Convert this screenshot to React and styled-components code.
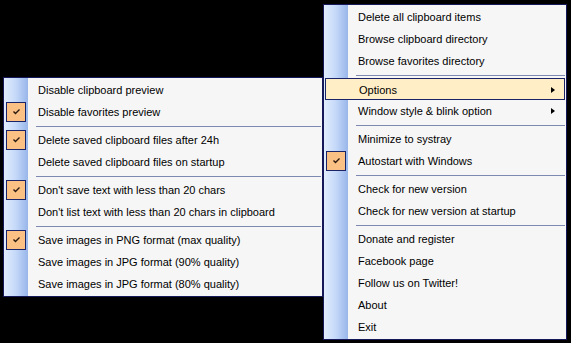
import React from 'react';
import styled, { createGlobalStyle } from 'styled-components';

const GlobalStyle = createGlobalStyle`
  html, body {
    margin: 0;
    padding: 0;
    background: #000;
  }
  body {
    font-family: "Liberation Sans", Arial, sans-serif;
    font-size: 11px;
  }
`;

const Desktop = styled.div`
  display: flex;
  align-items: flex-start;
  width: 571px;
  height: 343px;
  padding-left: 3px;
  box-sizing: border-box;
  overflow: hidden;
`;

const Menu = styled.div`
  width: ${p => p.width}px;
  margin-top: ${p => p.top}px;
  box-sizing: border-box;
  border: 1px solid #15195a;
  padding: 1px 1px 1px 0;
  display: flex;
  flex-direction: column;
  background: linear-gradient(to right, #e2edfd 0, #c4d8f8 12px, #98b6ea 24px, #f6f6f6 24px);
`;

const Item = styled.div`
  display: grid;
  grid-template-columns: 24px 1fr 20px;
  align-items: center;
  height: 22px;
  box-sizing: border-box;
  color: #000;
  white-space: nowrap;
  ${p => p.active && `
    background: #ffeec6;
    border: 1px solid #1a2268;
    margin-left: 1px;
    grid-template-columns: 23px 1fr 19px;
  `}
`;

const Gutter = styled.div`
  display: flex;
  align-items: center;
  justify-content: center;
  height: 100%;
`;

const CheckBox = styled.div`
  width: 20px;
  height: 20px;
  box-sizing: border-box;
  border: 1px solid #1a2268;
  background: #fbc084;
  display: flex;
  align-items: center;
  justify-content: center;
`;

const Label = styled.span`
  padding-left: 10px;
  line-height: 22px;
`;

const Arrow = styled.span`
  width: 0;
  height: 0;
  border-top: 3.5px solid transparent;
  border-bottom: 3.5px solid transparent;
  border-left: 4px solid #000;
  justify-self: end;
  margin-right: ${p => (p.active ? 9 : 10)}px;
`;

const Separator = styled.div`
  height: 6px;
  display: flex;
  align-items: center;
  padding-left: 32px;

  &::after {
    content: '';
    flex: 1;
    height: 1px;
    background: #7d89b0;
  }
`;

const Check = () => (
  <svg width="7" height="6" viewBox="0 0 7 6">
    <path d="M0.5 2.5 L2.5 4.5 L6.5 0.5" stroke="#2a1a10" strokeWidth="1.4" fill="none" />
  </svg>
);

const MenuRow = ({ item }) => {
  if (item === '-') return <Separator />;
  return (
    <Item active={item.active}>
      <Gutter>
        {item.checked && (
          <CheckBox>
            <Check />
          </CheckBox>
        )}
      </Gutter>
      <Label>{item.label}</Label>
      {item.sub ? <Arrow active={item.active} /> : <span />}
    </Item>
  );
};

const optionItems = [
  { label: 'Disable clipboard preview' },
  { label: 'Disable favorites preview', checked: true },
  '-',
  { label: 'Delete saved clipboard files after 24h', checked: true },
  { label: 'Delete saved clipboard files on startup' },
  '-',
  { label: "Don't save text with less than 20 chars", checked: true },
  { label: "Don't list text with less than 20 chars in clipboard" },
  '-',
  { label: 'Save images in PNG format (max quality)', checked: true },
  { label: 'Save images in JPG format (90% quality)' },
  { label: 'Save images in JPG format (80% quality)' },
];

const mainItems = [
  { label: 'Delete all clipboard items' },
  { label: 'Browse clipboard directory' },
  { label: 'Browse favorites directory' },
  '-',
  { label: 'Options', sub: true, active: true },
  { label: 'Window style & blink option', sub: true },
  '-',
  { label: 'Minimize to systray' },
  { label: 'Autostart with Windows', checked: true },
  '-',
  { label: 'Check for new version' },
  { label: 'Check for new version at startup' },
  '-',
  { label: 'Donate and register' },
  { label: 'Facebook page' },
  { label: 'Follow us on Twitter!' },
  { label: 'About' },
  { label: 'Exit' },
];

const App = () => (
  <>
    <GlobalStyle />
    <Desktop>
      <Menu width={320} top={77}>
        {optionItems.map((item, i) => <MenuRow key={i} item={item} />)}
      </Menu>
      <Menu width={244} top={4}>
        {mainItems.map((item, i) => <MenuRow key={i} item={item} />)}
      </Menu>
    </Desktop>
  </>
);

export default App;
